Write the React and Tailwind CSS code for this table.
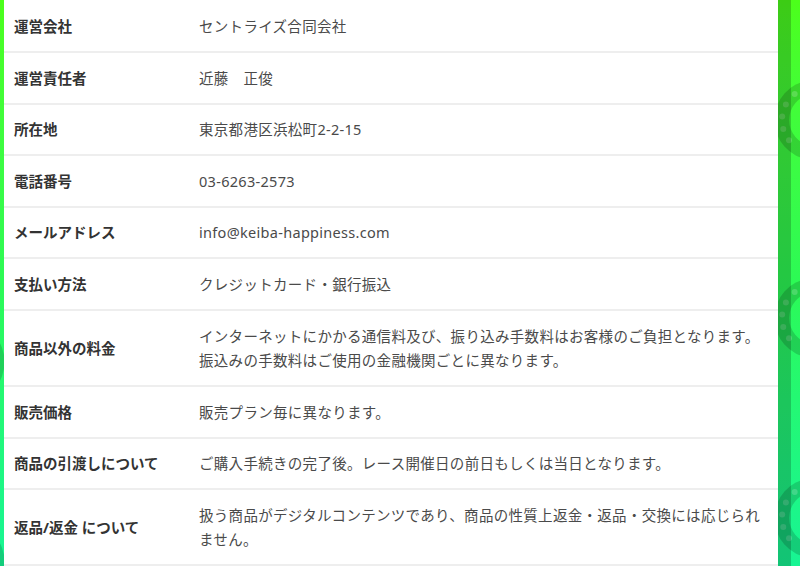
import React from 'react'

const rows = [
  { label: '運営会社', value: 'セントライズ合同会社' },
  { label: '運営責任者', value: '近藤　正俊' },
  { label: '所在地', value: '東京都港区浜松町2-2-15' },
  { label: '電話番号', value: '03-6263-2573' },
  { label: 'メールアドレス', value: 'info@keiba-happiness.com' },
  { label: '支払い方法', value: 'クレジットカード・銀行振込' },
  {
    label: '商品以外の料金',
    value: 'インターネットにかかる通信料及び、振り込み手数料はお客様のご負担となります。振込みの手数料はご使用の金融機関ごとに異なります。',
  },
  { label: '販売価格', value: '販売プラン毎に異なります。' },
  { label: '商品の引渡しについて', value: 'ご購入手続きの完了後。レース開催日の前日もしくは当日となります。' },
  {
    label: '返品/返金 について',
    value: '扱う商品がデジタルコンテンツであり、商品の性質上返金・返品・交換には応じられません。',
  },
]

// horseshoe decoration, opening to the right
function Horseshoe({ cx, cy, flip }) {
  const dots = [-52, -28, -6, 16, 38]
  const s = flip ? -1 : 1
  return (
    <g transform={`translate(${cx} ${cy}) scale(${s} 1)`}>
      <path
        d="M 22 -33 A 40 40 0 1 0 22 33 L 14 22 A 26 26 0 1 1 14 -22 Z"
        fill="rgba(0,0,0,0.16)"
      />
      {dots.map((a, i) => {
        const r = (a - 180) * Math.PI / 180
        return <circle key={i} cx={33 * Math.cos(-r)} cy={33 * Math.sin(r) * -1} r="3" fill="rgba(255,255,255,0.18)" />
      })}
    </g>
  )
}

export default function App() {
  return (
    <div
      className="relative flex w-[800px] h-[566px] overflow-hidden bg-gradient-to-b from-[#4cff1a] via-[#2cfa55] to-[#17f594]"
      style={{ fontFamily: '"Noto Sans", "Noto Sans CJK JP", sans-serif' }}
    >
      <svg className="absolute inset-0 pointer-events-none" width="800" height="566">
        <Horseshoe cx={815} cy={120} />
        <Horseshoe cx={815} cy={318} />
        <Horseshoe cx={815} cy={518} />
        <Horseshoe cx={-36} cy={362} flip />
        <Horseshoe cx={-36} cy={562} flip />
      </svg>

      <div className="w-[4px] shrink-0" />

      <div className="relative w-[774px] shrink-0 bg-white self-start pt-[1.5px]">
        {rows.map(r => (
          <div key={r.label} className="flex border-b-2 border-[#eeeeee]">
            <div className="w-[195px] shrink-0 pl-[10px] flex items-center text-[14.5px] font-bold text-[#333] leading-[24.4px] py-[12.6px]">
              {r.label}
            </div>
            <div className="w-[566px] text-[14.5px] tracking-[0.3px] text-[#4a4a4a] leading-[24.4px] py-[12.6px]">
              {r.value}
            </div>
          </div>
        ))}
      </div>

      <div className="relative w-[13px] shrink-0 bg-black/20" />
    </div>
  )
}
